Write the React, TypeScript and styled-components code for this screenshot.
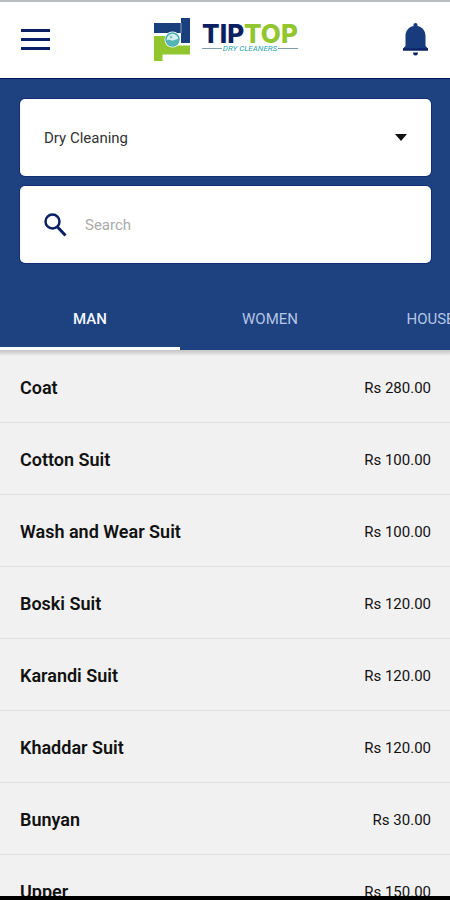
import React, { useState } from "react";
import styled, { createGlobalStyle } from "styled-components";

const NAVY = "#0b1f63";
const BLUE = "#1e417f";

const GlobalStyle = createGlobalStyle`
  *, *::before, *::after { box-sizing: border-box; }
  body {
    margin: 0;
    background: #f1f1f1;
    color: #111;
    font-family: Roboto, "Liberation Sans", sans-serif;
  }
`;

const Screen = styled.div`
  display: flex;
  flex-direction: column;
  height: 100vh;
  overflow: hidden;
  border-top: 2px solid #b9bdc0;
  border-bottom: 4px solid #000;
`;

const Header = styled.header`
  display: flex;
  align-items: center;
  justify-content: space-between;
  flex: none;
  height: 76px;
  padding: 0 20px;
  background: #fff;
`;

const IconButton = styled.button`
  display: flex;
  padding: 0;
  border: 0;
  background: none;
  cursor: pointer;
`;

const Brand = styled.a`
  display: flex;
  align-items: center;
  gap: 10px;
  text-decoration: none;
`;

const BrandText = styled.span`
  display: flex;
  flex-direction: column;
  padding-bottom: 5px;
`;

const BrandName = styled.span`
  color: ${NAVY};
  font: 800 26px/22px Inter, Roboto, sans-serif;
`;

const BrandGreen = styled.span`
  color: #92c62e;
`;

const Tagline = styled.span`
  display: flex;
  align-items: center;
  gap: 1px;
  color: #27a3ae;
  font: italic 400 8px/8px Roboto, sans-serif;
  white-space: nowrap;

  &::before,
  &::after {
    content: "";
    flex: 1;
    height: 1px;
    background: #7f9fae;
  }
`;

const Filters = styled.section`
  display: flex;
  flex-direction: column;
  flex: none;
  gap: 10px;
  padding: 20px 19px 25px 20px;
  border-top: 1px solid #06135c;
  background: ${BLUE};
`;

const Field = styled.label`
  display: flex;
  align-items: center;
  height: 77px;
  padding: 0 24px;
  border-radius: 5px;
  background: #fff;
  box-shadow: 0 0 0 1px #122f74;
`;

const Select = styled.select`
  flex: 1;
  min-width: 0;
  padding: 0;
  border: 0;
  outline: 0;
  appearance: none;
  background: none;
  color: #333;
  font: 400 15px/24px Roboto, sans-serif;
`;

const SearchInput = styled.input`
  flex: 1;
  min-width: 0;
  margin-left: 18px;
  padding: 0;
  border: 0;
  outline: 0;
  background: none;
  color: #333;
  font: 400 15px/24px Roboto, sans-serif;

  &::placeholder { color: #aaa; opacity: 1; }
`;

const Tabs = styled.nav`
  display: flex;
  flex: none;
  overflow: hidden;
  background: ${BLUE};
`;

const Tab = styled.button<{ $active: boolean }>`
  flex: 0 0 40%;
  height: 62px;
  padding: 3px 0 0;
  border: 0;
  border-bottom: 3px solid ${(p) => (p.$active ? "#fff" : "transparent")};
  background: none;
  color: ${(p) => (p.$active ? "#f5f8ff" : "#b4c6e6")};
  font: ${(p) => (p.$active ? 500 : 400)} 15px/20px Roboto, sans-serif;
  cursor: pointer;
`;

const PriceList = styled.ul`
  flex: 1;
  min-height: 0;
  margin: 0;
  padding: 0;
  overflow: hidden;
  list-style: none;
  background: linear-gradient(#c4c4c4, #f1f1f1 6px);
`;

const PriceRow = styled.li`
  display: flex;
  align-items: center;
  justify-content: space-between;
  height: 72px;
  padding: 3px 19px 0 20px;
  border-bottom: 1px solid #e0e0e0;

  &:first-child { height: 73px; }
`;

const ItemName = styled.span`
  font-size: 18px;
  font-weight: 600;
  line-height: 24px;
`;

const Price = styled.span`
  font-size: 15px;
  line-height: 24px;
`;

const items = [
  ["Coat", "280.00"],
  ["Cotton Suit", "100.00"],
  ["Wash and Wear Suit", "100.00"],
  ["Boski Suit", "120.00"],
  ["Karandi Suit", "120.00"],
  ["Khaddar Suit", "120.00"],
  ["Bunyan", "30.00"],
  ["Upper", "150.00"],
];

const tabs = ["MAN", "WOMEN", "HOUSEHOLD"];

const MenuIcon = () => (
  <svg width="31" height="24" viewBox="0 0 31 24" aria-hidden="true">
    <path d="M1 2.500h29M1 11.500h29M1 20.500h29" stroke={NAVY} strokeWidth="3" />
  </svg>
);

const BellIcon = () => (
  <svg width="29" height="34" viewBox="0 0 29 34" aria-hidden="true">
    <path
      d="M14.500 0c1.300 0 2 .8 2 2v1C21.500 4 24.500 8 24.500 13v10l2.500 2.500V27.500H2v-2L4.500 23V13C4.500 8 7.500 4 12.500 3V2c0-1.200.7-2 2-2z"
      fill="#173b7d"
    />
    <path d="M2 26.500h25" stroke={NAVY} strokeWidth="2" />
    <path d="M12 29.500h5c0 2-1 3-2.500 3s-2.500-1-2.500-3z" fill={NAVY} />
  </svg>
);

const LogoMark = () => (
  <svg width="38" height="44" viewBox="0 0 38 44" aria-hidden="true">
    <path d="M0 5h27V0h9v25h-9V15H0z" fill="#193f7c" />
    <path d="M27 5v10" stroke="#8fa3c4" strokeWidth="1" />
    <path d="M0 18h14v9.500h22v9H8.500V43H0z" fill="#92c62e" />
    <circle cx="18.500" cy="21.500" r="8" fill="#fff" />
    <circle cx="18.500" cy="21.500" r="6.500" fill="#d5f0ef" stroke="#4badb4" strokeWidth="1.500" />
    <path d="M12.500 23c3-3 5 1 8-1 2-1 3-1 4.500-1 0 4-3 6.500-6.500 6.500-3 0-5-2-6-4.500z" fill="#53b6b5" />
    <circle cx="17" cy="19" r="1.500" fill="#84ccc9" />
  </svg>
);

const SearchIcon = () => (
  <svg width="23" height="24" viewBox="0 0 23 24" aria-hidden="true">
    <circle cx="8.500" cy="8.500" r="7" fill="none" stroke={NAVY} strokeWidth="2.500" />
    <path d="M13.500 14l8 8.500" stroke={NAVY} strokeWidth="3" />
  </svg>
);

const CaretIcon = () => (
  <svg width="12" height="7" viewBox="0 0 12 7" aria-hidden="true">
    <path d="M0 0h12L6 7z" fill="#111" />
  </svg>
);

export default function App() {
  const [active, setActive] = useState("MAN");

  return (
    <>
      <GlobalStyle />
      <Screen>
        <Header>
          <IconButton aria-label="Menu">
            <MenuIcon />
          </IconButton>
          <Brand href="#" aria-label="TipTop Dry Cleaners">
            <LogoMark />
            <BrandText>
              <BrandName>
                TIP<BrandGreen>TOP</BrandGreen>
              </BrandName>
              <Tagline>DRY CLEANERS</Tagline>
            </BrandText>
          </Brand>
          <IconButton aria-label="Notifications">
            <BellIcon />
          </IconButton>
        </Header>
        <Filters>
          <Field>
            <Select aria-label="Service">
              <option>Dry Cleaning</option>
            </Select>
            <CaretIcon />
          </Field>
          <Field>
            <SearchIcon />
            <SearchInput type="search" placeholder="Search" aria-label="Search" />
          </Field>
        </Filters>
        <Tabs>
          {tabs.map((tab) => (
            <Tab key={tab} $active={tab === active} onClick={() => setActive(tab)}>
              {tab}
            </Tab>
          ))}
        </Tabs>
        <PriceList>
          {items.map(([name, price]) => (
            <PriceRow key={name}>
              <ItemName>{name}</ItemName>
              <Price>Rs {price}</Price>
            </PriceRow>
          ))}
        </PriceList>
      </Screen>
    </>
  );
}
